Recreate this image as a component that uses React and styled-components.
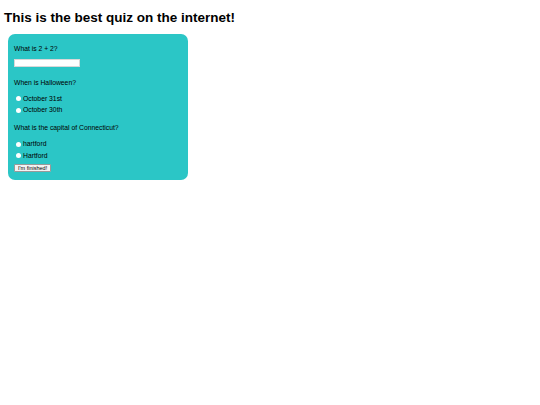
import React from "react";
import styled, { createGlobalStyle } from "styled-components";

const Global = createGlobalStyle`
  html, body { margin: 0; padding: 0; background: #fff; }
  body { padding: 4px; font-family: "Liberation Sans", Arial, sans-serif; color: #000; }
`;

const Title = styled.h1`
  margin: 6px 0 8.6px 0;
  font-size: 13.5px;
  font-weight: bold;
  line-height: 15.4px;
`;

const Card = styled.form`
  margin-left: 4px;
  width: 180px;
  box-sizing: border-box;
  background: #2bc6c6;
  border-radius: 7px;
  padding: 10.6px 6px 8.5px 6px;
  display: flex;
  flex-direction: column;
  align-items: flex-start;
`;

const Question = styled.p`
  margin: ${(p) => p.$top || 0}px 0 0 0;
  font-size: 6.8px;
  line-height: 8px;
`;

const TextInput = styled.input`
  margin: 6.6px 0 0 0;
  width: 66px;
  height: 8px;
  box-sizing: border-box;
  border: 0.5px solid #d8d8d8;
  background: #fff;
  padding: 0;
  outline: none;
`;

const Options = styled.div`
  margin-top: ${(p) => p.$top}px;
  display: flex;
  flex-direction: column;
`;

const Option = styled.label`
  display: flex;
  align-items: center;
  height: 11.8px;
  font-size: 6.8px;
  line-height: 8px;
  padding-left: 2px;
  gap: 2px;
`;

const Radio = styled.input.attrs({ type: "radio" })`
  appearance: none;
  -webkit-appearance: none;
  margin: 0;
  width: 5px;
  height: 5px;
  border-radius: 50%;
  background: #fff;
  border: none;
`;

const Button = styled.button`
  margin-top: 2px;
  height: 8px;
  padding: 0 3px;
  font-family: "Liberation Sans", Arial, sans-serif;
  font-size: 5.5px;
  line-height: 7px;
  background: #f3f3f3;
  border: 0.5px solid #999;
  border-radius: 1px;
  color: #000;
`;

export default function App() {
  return (
    <>
      <Global />
      <Title>This is the best quiz on the internet!</Title>
      <Card onSubmit={(e) => e.preventDefault()}>
        <Question>What is 2 + 2?</Question>
        <TextInput type="text" />
        <Question $top={11.6}>When is Halloween?</Question>
        <Options $top={5.9}>
          <Option><Radio name="hw" />October 31st</Option>
          <Option><Radio name="hw" />October 30th</Option>
        </Options>
        <Question $top={8.2}>What is the capital of Connecticut?</Question>
        <Options $top={5.7}>
          <Option><Radio name="ct" />hartford</Option>
          <Option><Radio name="ct" />Hartford</Option>
        </Options>
        <Button type="button">I'm finished!</Button>
      </Card>
    </>
  );
}
